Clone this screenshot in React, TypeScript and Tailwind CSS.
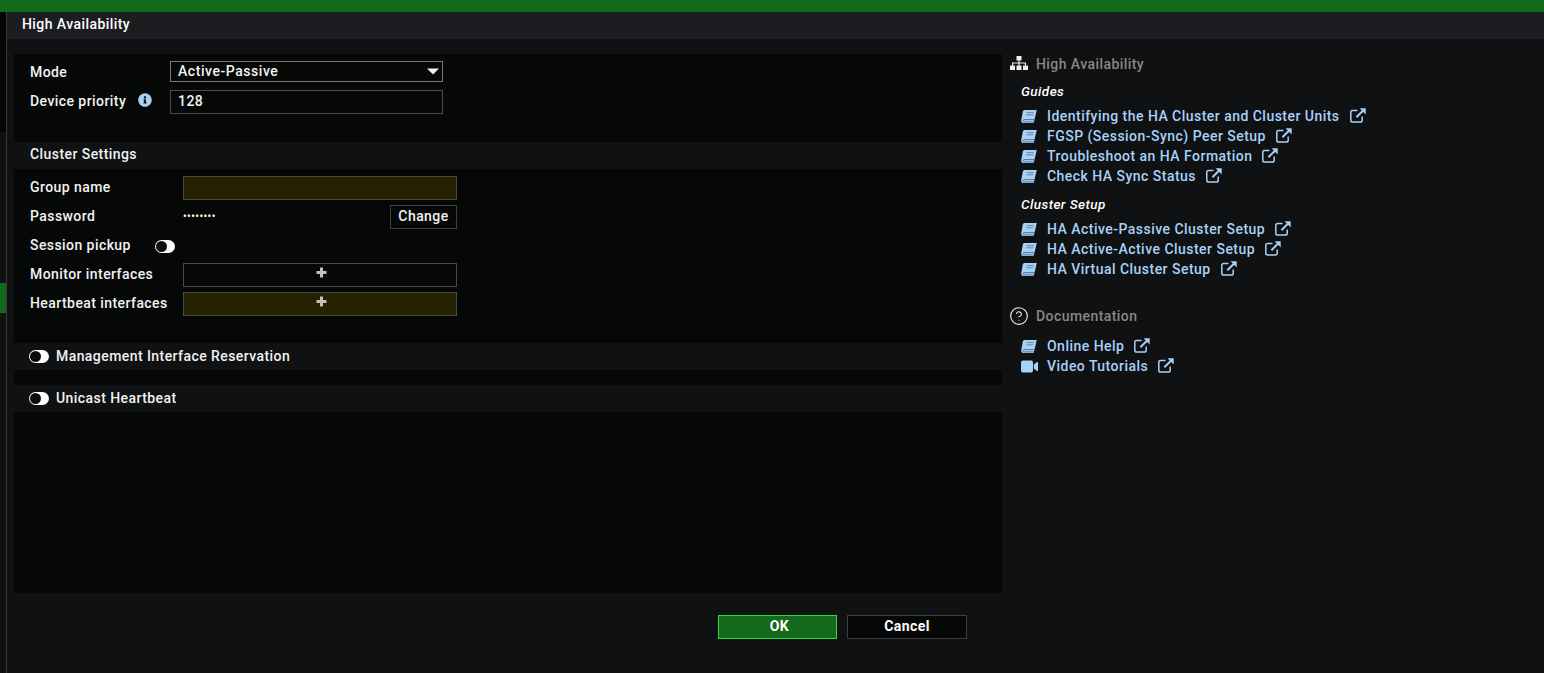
import React from 'react';
import { FaInfoCircle } from 'react-icons/fa';
import { CircleHelp } from 'lucide-react';

const BookIcon = () => (
  <svg viewBox="0 0 16 13" className="w-4 h-[13px] shrink-0">
    <path
      fill="#a8d1f7"
      d="M3.6 0 H15.8 L12.7 13 H2.2 C0.8 13 0 12 0.2 10.6 L1.8 1.6 C2 0.6 2.7 0 3.6 0 Z"
    />
    <path d="M13.5 9.6 H3.2 C1.6 9.6 1.4 11.9 3 11.9 H13" stroke="#3f5a73" strokeWidth="0.8" fill="none" />
    <path d="M5.6 2.6 H12.8 M5.1 4.8 H12.2" stroke="#4a6a86" strokeWidth="0.7" fill="none" />
  </svg>
);

const VideoIcon = () => (
  <svg viewBox="0 0 17 13" className="w-[17px] h-[13px] shrink-0" fill="#a8d1f7">
    <rect x="0" y="0.5" width="12" height="12" rx="2" />
    <path d="M12.8 4.6 L16 2 C16.4 1.8 17 2 17 2.6 V10.4 C17 11 16.4 11.2 16 11 L12.8 8.4 Z" />
  </svg>
);

const SitemapIcon = () => (
  <svg viewBox="0 0 18 14" className="w-[18px] h-[14px]" fill="#f2f2f2">
    <rect x="6.5" y="0" width="5" height="4.5" />
    <rect x="0" y="9.5" width="5" height="4.5" />
    <rect x="6.5" y="9.5" width="5" height="4.5" />
    <rect x="13" y="9.5" width="5" height="4.5" />
    <path d="M8.4 4.5 H9.6 V6.4 H16 V9.5 H14.8 V7.6 H9.6 V9.5 H8.4 V7.6 H3.2 V9.5 H2 V6.4 H8.4 Z" />
  </svg>
);

const ExternalIcon = () => (
  <svg viewBox="0 0 16 15" className="w-4 h-[15px] shrink-0" fill="none" stroke="#a8d1f7">
    <path d="M7.5 2.4 H2.6 C1.6 2.4 0.8 3.2 0.8 4.2 V12.2 C0.8 13.2 1.6 14 2.6 14 H10.4 C11.4 14 12.2 13.2 12.2 12.2 V8.5" strokeWidth="1.5" />
    <path d="M6.4 9.2 L13.6 2" strokeWidth="2" />
    <path d="M9.6 0.3 H15.7 V6.4 Z" fill="#a8d1f7" stroke="none" />
  </svg>
);

const PlusIcon = () => (
  <svg viewBox="0 0 11 11" className="w-[11px] h-[11px]" fill="#c4c0b8">
    <path d="M4 0.5 H7 V4 H10.5 V7 H7 V10.5 H4 V7 H0.5 V4 H4 Z" />
  </svg>
);

const Toggle = () => (
  <span className="flex items-center w-5 h-[13px] rounded-full bg-white shrink-0">
    <span className="w-[11px] h-[11px] ml-px rounded-full bg-[#0a0c0e]" />
  </span>
);

const SectionHeader = ({ children }: { children: React.ReactNode }) => (
  <div className="h-[27px] flex items-center gap-2 pl-[15px] bg-[#0f1113] text-[#f2f2f2]">{children}</div>
);

const FormRow = ({ label, className, children }: { label: string; className?: string; children?: React.ReactNode }) => (
  <div className={`flex items-center ${className ?? ''}`}>
    <span className="w-[169px] pl-[16px] pb-[2px] shrink-0">{label}</span>
    {children}
  </div>
);

const DocLink = ({ label, icon }: { label: string; icon?: React.ReactNode }) => (
  <div className="h-5 flex items-center text-[#a8d1f7] tracking-[0.47px]">
    <span className="w-[26px] shrink-0 flex">{icon ?? <BookIcon />}</span>
    <span>{label}</span>
    <span className="ml-[10px] pb-[2px]"><ExternalIcon /></span>
  </div>
);

const App = () => {
  return (
    <div
      className="w-[1544px] h-[673px] overflow-hidden flex flex-col bg-[#0f1113] text-[14px] font-medium text-[#f2f2f2] tracking-[0.43px]"
      style={{ fontFamily: 'Roboto, "Liberation Sans", sans-serif' }}
    >
      <div className="h-3 bg-[#136a1c] shrink-0" />
      <div className="flex flex-1">
        {/* Left strip behind the dialog */}
        <div className="w-[7px] flex flex-col border-r border-[#3a3b3d] shrink-0">
          <div className="h-[120px] bg-[#040606]" />
          <div className="h-[151px] bg-[#0f1113]" />
          <div className="h-[30px] bg-[#136a1c]" />
          <div className="flex-1 bg-[#0f1113]" />
        </div>

        <div className="flex-1 flex flex-col">
          <div className="h-[27px] flex items-center pl-[15px] pb-[2px] bg-[#1c1d20] text-white shrink-0">High Availability</div>

          <div className="flex pl-[7px] pt-[15px]">
            {/* Form panel */}
            <div className="w-[988px] h-[539px] bg-[#060808] flex flex-col shrink-0">
              <div className="flex items-center h-[21px] mt-[7px]">
                <span className="w-[156px] pl-[16px] pt-[2px]">Mode</span>
                <div className="w-[273px] h-[21px] flex items-center justify-between pl-[7px] pr-[3px] border border-[#77787a] bg-[#060808]">
                  <span className="tracking-[0.55px]">Active-Passive</span>
                  <svg viewBox="0 0 12 7" className="w-3 h-[7px]" fill="#f2f2f2"><path d="M0 0.5 H12 L6 6.5 Z" /></svg>
                </div>
              </div>
              <div className="flex items-center h-6 mt-2">
                <span className="w-[123px] pl-[16px] pb-[2px]">Device priority</span>
                <span className="w-[33px] flex pl-[1px] pb-[4px]"><FaInfoCircle className="w-[14px] h-[14px] text-[#a8d1f7]" /></span>
                <div className="w-[273px] h-6 flex items-center pl-[7px] pb-[2px] border border-[#4a4b4d]">128</div>
              </div>

              <div className="mt-7">
                <SectionHeader><span className="pl-px pb-[2px]">Cluster Settings</span></SectionHeader>
              </div>

              <FormRow label="Group name" className="mt-[7px] h-6">
                <div className="w-[274px] h-6 border border-[#4a4b3a] bg-[#262100]" />
              </FormRow>
              <FormRow label="Password" className="mt-[5px] h-6">
                <span className="w-[207px] text-[10px] leading-none tracking-[0.5px] font-bold text-[#fff6d8]">••••••••</span>
                <div className="w-[67px] h-6 flex items-center justify-center pb-[2px] border border-[#3e3f41]">Change</div>
              </FormRow>
              <div className="flex items-center mt-[5px] h-6">
                <span className="w-[141px] pl-[16px] pb-[2px] shrink-0">Session pickup</span>
                <Toggle />
              </div>
              <FormRow label="Monitor interfaces" className="mt-[5px] h-6">
                <div className="w-[274px] h-6 flex justify-center pt-[3px] pl-[2px] border border-[#4a4b4d]">
                  <PlusIcon />
                </div>
              </FormRow>
              <FormRow label="Heartbeat interfaces" className="mt-[5px] h-6">
                <div className="w-[274px] h-6 flex justify-center pt-[3px] pl-[2px] border border-[#4a4b3a] bg-[#262100]">
                  <PlusIcon />
                </div>
              </FormRow>

              <div className="mt-[27px]">
                <SectionHeader><Toggle /><span className="ml-[-1px]">Management Interface Reservation</span></SectionHeader>
              </div>
              <div className="mt-[15px]">
                <SectionHeader><Toggle /><span className="ml-[-1px]">Unicast Heartbeat</span></SectionHeader>
              </div>
            </div>

            {/* Help panel */}
            <div className="flex-1 pl-[8px] flex flex-col">
              <div className="h-5 flex items-center text-[#8a8784]">
                <span className="w-[26px] flex pb-[2px]"><SitemapIcon /></span>
                High Availability
              </div>
              <div className="pl-[11px] flex flex-col">
                <div className="h-5 mt-[7px] flex items-center italic text-[13.5px] text-white">Guides</div>
                <div className="mt-[5px]">
                  <DocLink label="Identifying the HA Cluster and Cluster Units" />
                  <DocLink label="FGSP (Session-Sync) Peer Setup" />
                  <DocLink label="Troubleshoot an HA Formation" />
                  <DocLink label="Check HA Sync Status" />
                </div>
                <div className="h-5 mt-[8px] flex items-center italic text-[13.5px] text-white">Cluster Setup</div>
                <div className="mt-[5px]">
                  <DocLink label="HA Active-Passive Cluster Setup" />
                  <DocLink label="HA Active-Active Cluster Setup" />
                  <DocLink label="HA Virtual Cluster Setup" />
                </div>
              </div>
              <div className="h-5 mt-[27px] flex items-center text-[#8a8784]">
                <span className="w-[26px] flex ml-[-1px] mr-px"><CircleHelp size={20} strokeWidth={1.3} className="text-[#f2f2f2]" /></span>
                Documentation
              </div>
              <div className="pl-[11px] mt-[10px]">
                <DocLink label="Online Help" />
                <DocLink label="Video Tutorials" icon={<VideoIcon />} />
              </div>
            </div>
          </div>

          <div className="flex gap-[10px] pl-[711px] mt-[22px]">
            <div className="w-[119px] h-6 flex items-center justify-center pl-[4px] pb-[2px] border border-[#34d83f] bg-[#136a1c] text-white font-bold">OK</div>
            <div className="w-[120px] h-6 flex items-center justify-center pb-[2px] border border-[#3e3f41] bg-[#060808] text-white font-bold">Cancel</div>
          </div>
        </div>
      </div>
    </div>
  );
};

export default App;
